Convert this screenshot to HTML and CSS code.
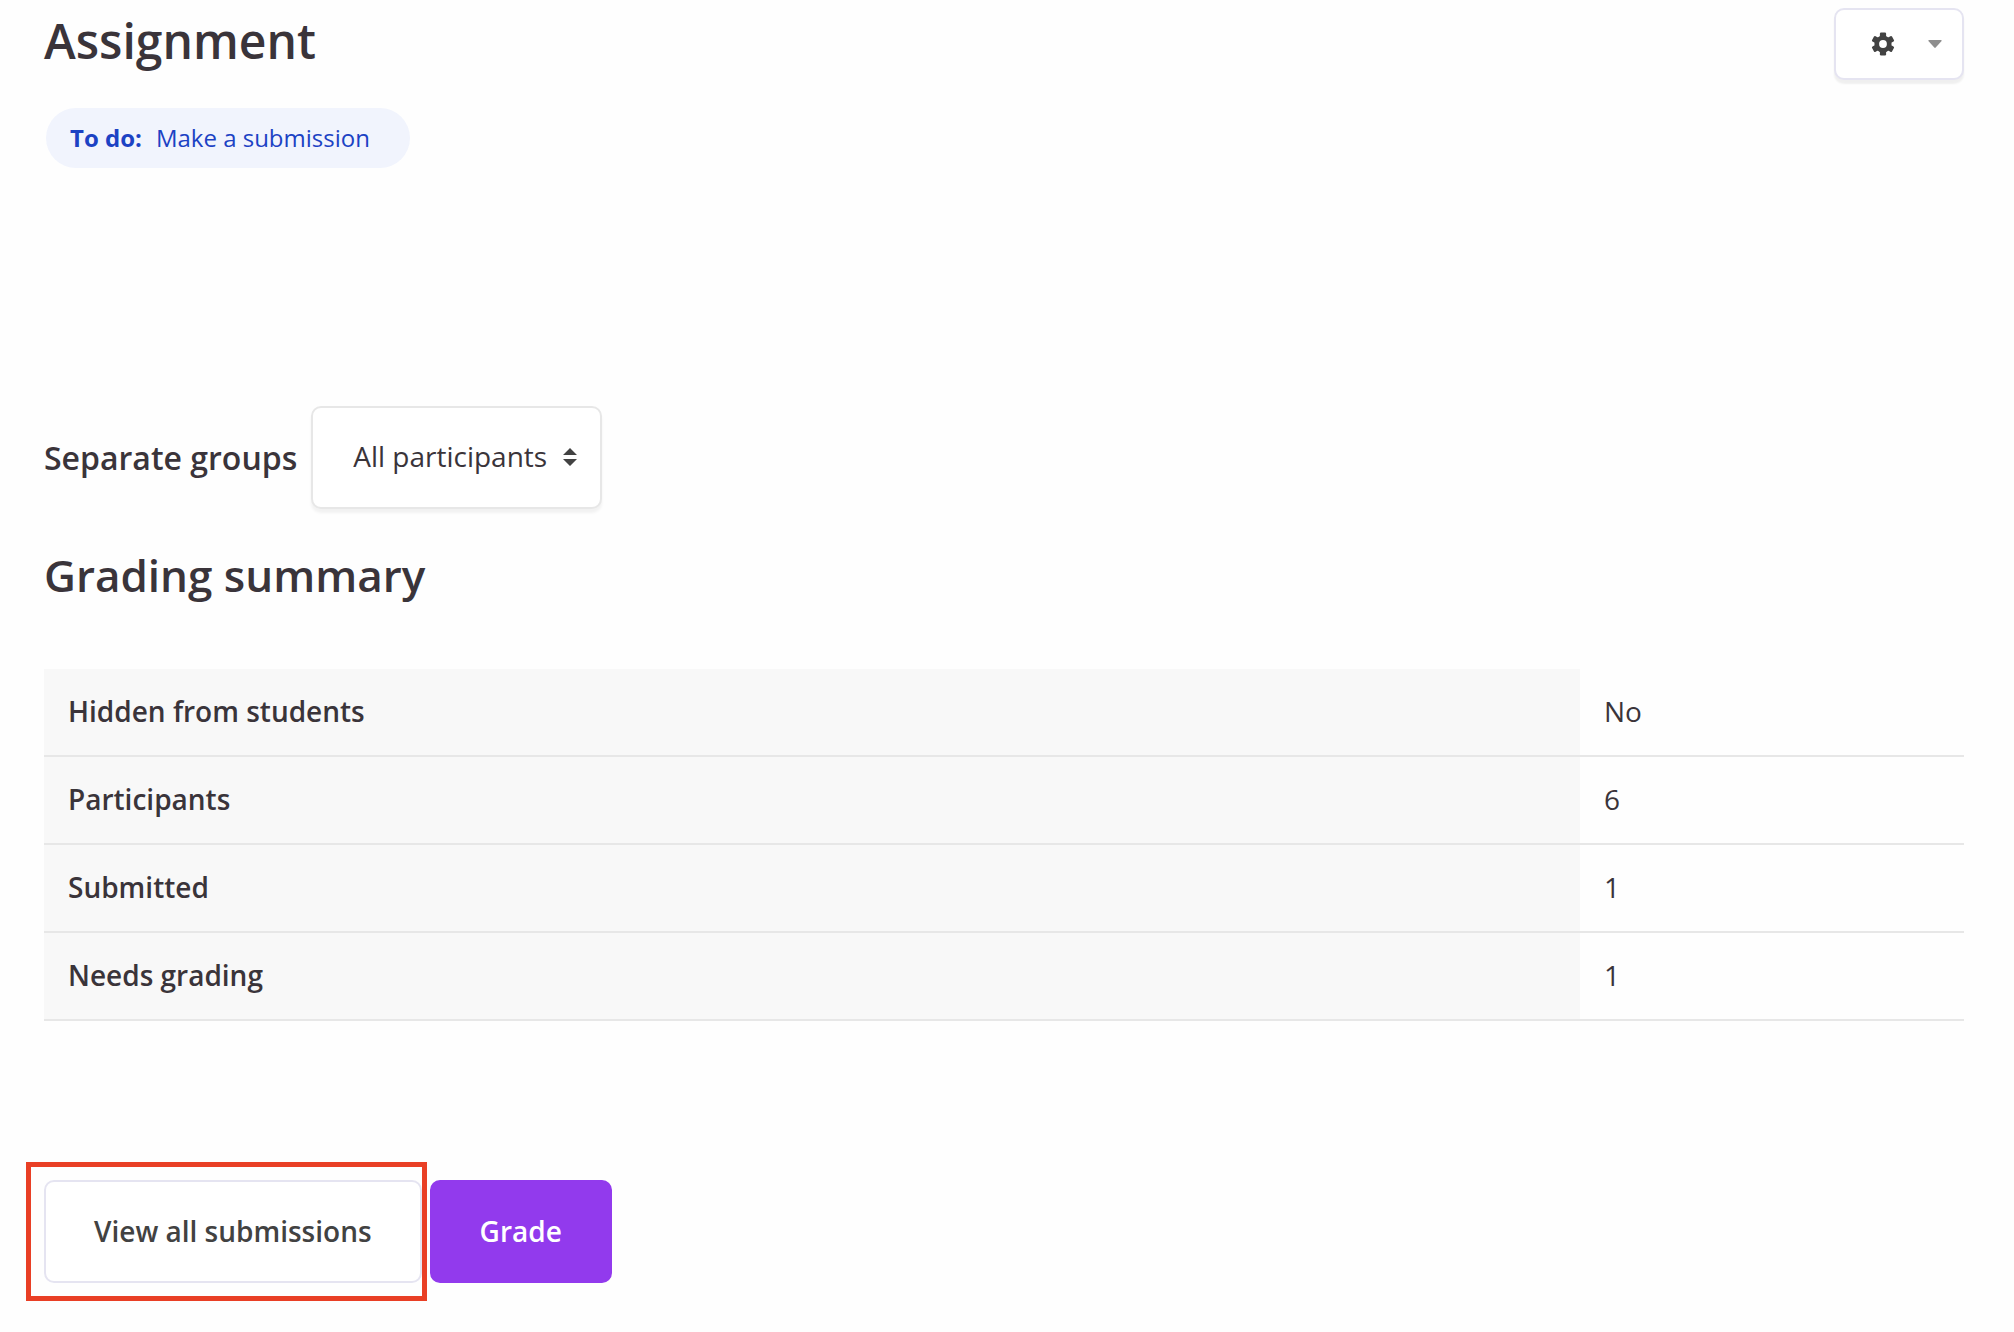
FILE: index.html
```html
<!DOCTYPE html>
<html lang="en">
<head>
  <meta charset="UTF-8">
  <title>Assignment</title>
  <link rel="stylesheet" href="styles.css">
</head>
<body>

<header class="page-header">
  <h1>Assignment</h1>
  <button class="settings" type="button" aria-label="Actions menu">
    <svg class="gear" viewBox="0 0 24 24" aria-hidden="true">
      <circle cx="12" cy="12" r="8.6"/>
      <rect x="8.9" y="0.5" width="6.2" height="23" rx="1.2"/>
      <rect x="8.9" y="0.5" width="6.2" height="23" rx="1.2" transform="rotate(60 12 12)"/>
      <rect x="8.9" y="0.5" width="6.2" height="23" rx="1.2" transform="rotate(120 12 12)"/>
      <circle class="hole" cx="12" cy="12" r="3.9"/>
    </svg>
    <svg class="caret" viewBox="0 0 14 8" aria-hidden="true">
      <path d="M1 0h12q1 0 .6.900L7.700 7.600q-.7.6-1.400 0L.4.900Q0 0 1 0z"/>
    </svg>
  </button>
</header>

<div class="todo">
  <strong>To do:</strong>
  <span>Make a submission</span>
</div>

<main>
  <div class="groups">
    <label for="group">Separate groups</label>
    <div class="select-box">
      <select id="group">
        <option>All participants</option>
      </select>
      <svg class="arrows" viewBox="0 0 14 18" aria-hidden="true">
        <path d="M7 0L14 7H0zM0 11h14L7 18z"/>
      </svg>
    </div>
  </div>

  <h2>Grading summary</h2>
  <table class="summary">
    <tr><th scope="row">Hidden from students</th><td>No</td></tr>
    <tr><th scope="row">Participants</th><td>6</td></tr>
    <tr><th scope="row">Submitted</th><td>1</td></tr>
    <tr><th scope="row">Needs grading</th><td>1</td></tr>
  </table>

  <div class="actions">
    <div class="highlight">
      <a class="btn btn-secondary" href="#submissions">View all submissions</a>
    </div>
    <a class="btn btn-primary" href="#grade">Grade</a>
  </div>
</main>

</body>
</html>
```
FILE: styles.css
```css
body {
  box-sizing: border-box;
  min-height: 100vh;
  margin: 0;
  padding: 8px 50px 40px 44px;
  font-family: "Open Sans", sans-serif;
  font-size: 28px;
  line-height: 38px;
  color: #3a343a;
  background-color: #fefefe;
}
h1, h2 {
  margin: 0;
  font-weight: 600;
}
h1 {
  font-size: 48px;
  line-height: 66px;
}
h2 {
  margin-top: 36px;
  font-size: 44px;
  line-height: 60px;
}
.page-header {
  display: flex;
  justify-content: space-between;
  align-items: flex-start;
}
.settings {
  display: flex;
  align-items: center;
  gap: 33px;
  height: 72px;
  padding: 0 20px 0 35px;
  border: 2px solid #e5e4f1;
  border-radius: 10px;
  background-color: #fff;
  box-shadow: 0 4px 2px rgba(0, 0, 0, 0.06);
}
.gear {
  width: 24px;
  height: 24px;
  fill: #424242;
}
.gear .hole {
  fill: #fff;
}
.caret {
  width: 14px;
  height: 8px;
  fill: #8e8e8e;
}
.todo {
  display: inline-flex;
  align-items: center;
  gap: 14px;
  height: 60px;
  margin: 28px 2px 0;
  padding: 0 40px 0 24px;
  border-radius: 30px;
  font-size: 24px;
  color: #1c42c4;
  background-color: #f1f4fd;
}
.groups {
  display: flex;
  align-items: center;
  gap: 14px;
  margin-top: 238px;
}
.groups label {
  font-size: 32px;
  font-weight: 600;
}
.select-box {
  position: relative;
}
.select-box select {
  display: block;
  appearance: none;
  height: 103px;
  padding: 0 53px 3px 40px;
  border: 2px solid #e7e7e7;
  border-radius: 10px;
  font: inherit;
  color: inherit;
  background-color: #fff;
  box-shadow: 0 4px 3px rgba(0, 0, 0, 0.05);
}
.arrows {
  position: absolute;
  top: 42px;
  right: 25px;
  width: 14px;
  height: 18px;
  fill: #424242;
  pointer-events: none;
}
.summary {
  width: 100%;
  margin-top: 64px;
  border-collapse: collapse;
}
.summary th, .summary td {
  padding: 23px 24px 25px;
  border-bottom: 2px solid #e7e7e7;
  text-align: left;
}
.summary th {
  width: 80%;
  box-sizing: border-box;
  font-weight: 600;
  background-color: #f8f8f8;
}
.actions {
  display: flex;
  gap: 8px;
  margin-top: 159px;
}
.btn {
  display: block;
  padding: 30px 48px 31px;
  border: 2px solid;
  border-radius: 10px;
  font-weight: 600;
  text-decoration: none;
}
.btn-secondary {
  border-color: #e5e4f1;
  color: #424242;
  background-color: #fff;
}
.btn-primary {
  border-color: #923aed;
  color: #fff;
  background-color: #923aed;
}
.highlight {
  position: relative;
}
/* red frame around the button */
.highlight::after {
  content: "";
  position: absolute;
  inset: -18px -5px -18px -18px;
  border: 5px solid #e93f25;
  pointer-events: none;
}
```
